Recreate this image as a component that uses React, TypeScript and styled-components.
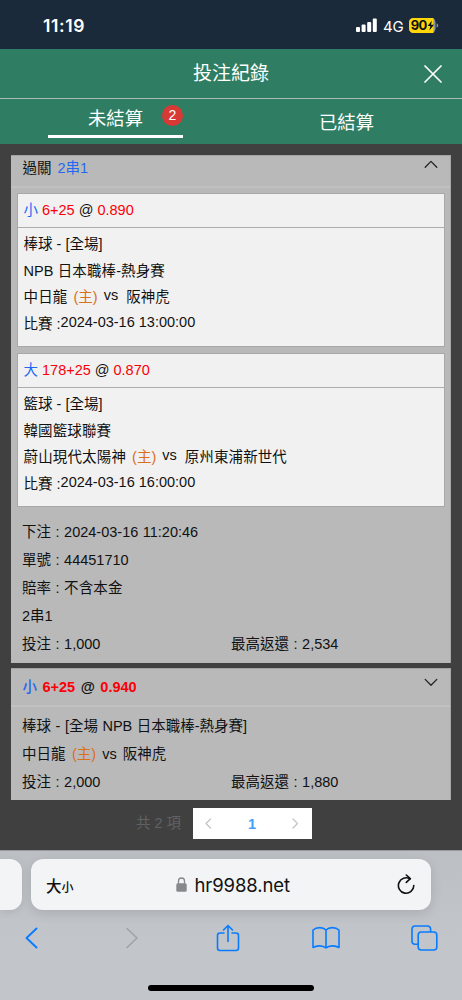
import React from "react";
import styled, { createGlobalStyle } from "styled-components";

const GlobalStyle = createGlobalStyle`
  * { box-sizing: border-box; }
  body {
    margin: 0;
    background: #404040;
    font-family: "Liberation Sans", "Noto Sans CJK TC", sans-serif;
    font-size: 14.5px;
    color: #111;
  }
  svg { display: block; flex: none; }
`;

const Screen = styled.div`
  width: 462px;
  height: 1000px;
  display: flex;
  flex-direction: column;
  overflow: hidden;
  background: #404040;
`;

const StatusBar = styled.header`
  height: 49px;
  flex: none;
  display: flex;
  align-items: center;
  padding: 1px 23px 0 43px;
  background: #1b2a3b;
  color: #fff;
  font-family: Inter, sans-serif;
`;

const Clock = styled.span`
  flex: 1;
  font-size: 17.5px;
  font-weight: 600;
  letter-spacing: 0.6px;
`;

const Network = styled.span`
  margin: 2px 6px 0 6px;
  width: 20px;
  font-size: 15px;
  letter-spacing: -0.3px;
`;

const TitleBar = styled.div`
  height: 50px;
  flex: none;
  display: grid;
  grid-template-columns: 60px 1fr 60px;
  align-items: center;
  background: #2f7e63;
  border-bottom: 1px solid #a9bbb2;
  color: #fff;
`;

const Title = styled.h1`
  grid-column: 2;
  margin: 0;
  text-align: center;
  font-size: 19px;
  font-weight: 400;
  line-height: 50px;
`;

const CloseButton = styled.div`
  display: flex;
  justify-content: center;
  padding-left: 2px;
`;

const Tabs = styled.nav`
  height: 45px;
  flex: none;
  display: grid;
  grid-template-columns: 1fr 1fr;
  justify-items: center;
  background: #2f7e63;
  color: #fff;
  font-size: 18.3px;
`;

const Tab = styled.div<{ $active?: boolean }>`
  position: relative;
  width: 135px;
  height: ${(p) => (p.$active ? 39 : 45)}px;
  line-height: ${(p) => (p.$active ? 40 : 47)}px;
  text-align: center;
  border-bottom: ${(p) => (p.$active ? "3px solid #fff" : "0")};
`;

const Badge = styled.span`
  position: absolute;
  top: 6px;
  right: 0;
  width: 21px;
  height: 21px;
  border-radius: 50%;
  background: #d73a34;
  font-size: 14px;
  line-height: 21px;
`;

const Records = styled.main`
  height: 706px;
  flex: none;
  display: flex;
  flex-direction: column;
  padding: 11px 11px 0;
`;

const Card = styled.section<{ $height: number }>`
  height: ${(p) => p.$height}px;
  margin-bottom: 5px;
  background: #b9b9b9;
  border-top: 1px solid #a3a3a3;
  border-right: 1px solid #a6a6a6;
`;

const CardHead = styled.div<{ $height: number; $bold?: boolean }>`
  display: flex;
  justify-content: space-between;
  height: ${(p) => p.$height}px;
  padding: 0 12px 0 11.5px;
  border-bottom: 2px solid #c1c1c1;
  line-height: ${(p) => (p.$bold ? 36 : 25)}px;
  font-weight: ${(p) => (p.$bold ? 700 : 400)};
`;

const Chevron = styled.div<{ $top: number }>`
  padding-top: ${(p) => p.$top}px;
`;

const Leg = styled.article`
  height: 154px;
  margin: 5px 5px 6px 6px;
  background: #f1f1f1;
  border: 1px solid #a8a8a8;
  & + & { margin-top: 0; }
`;

const LegHead = styled.div`
  height: 34px;
  padding: 0 5.5px;
  border-bottom: 1px solid #adadad;
  line-height: 33px;
`;

const LegBody = styled.div`
  padding: 3px 5.5px;
`;

const Line = styled.div<{ $h: number }>`
  height: ${(p) => p.$h}px;
  line-height: ${(p) => p.$h}px;
  white-space: pre;
`;

const Details = styled.div<{ $top: number }>`
  padding: ${(p) => p.$top}px 11px 0;
  word-spacing: 0.5px;
`;

const Split = styled.div`
  display: grid;
  grid-template-columns: 209px 1fr;
`;

const Text = styled.span<{ $color?: string; $ml?: number; $up?: number; $ls?: number; $weight?: number }>`
  color: ${(p) => p.$color ?? "inherit"};
  margin-left: ${(p) => p.$ml ?? 0}px;
  vertical-align: ${(p) => p.$up ?? 0}px;
  letter-spacing: ${(p) => p.$ls ?? 0}px;
  font-weight: ${(p) => p.$weight ?? "inherit"};
  line-height: 1;
`;

const Pager = styled.div`
  display: flex;
  align-items: center;
  margin: 3px 0 0 125px;
  color: #606266;
`;

const Total = styled.span`
  width: 57px;
  white-space: pre;
  line-height: 31px;
`;

const PageBox = styled.div`
  width: 119px;
  height: 31px;
  display: flex;
  align-items: center;
  justify-content: space-between;
  padding: 0 13px 0 12px;
  background: #fff;
  color: #409eff;
  font-weight: 700;
`;

const Browser = styled.footer`
  flex: 1;
  display: flex;
  flex-direction: column;
  padding-top: 8px;
  background: linear-gradient(#bcc0c5, #c2c6cb 60%);
  border-top: 1px solid #96999c;
`;

const AddressRow = styled.div`
  display: flex;
  gap: 9px;
  height: 51px;
`;

const PreviousPage = styled.div`
  width: 22px;
  background: #f2f4f5;
  border-radius: 0 12px 12px 0;
  box-shadow: 0 2px 8px rgba(0, 0, 0, 0.1);
`;

const AddressBar = styled.div`
  width: 400px;
  display: flex;
  align-items: center;
  padding: 0 14px 0 15px;
  background: #f2f4f5;
  border-radius: 12px;
  box-shadow: 0 3px 12px rgba(0, 0, 0, 0.13);
`;

const TextSize = styled.div`
  width: 130px;
  color: #111;
  font-size: 15.5px;
  font-weight: 500;
  font-family: "Noto Sans CJK TC", sans-serif;
  small { font-size: 12px; }
`;

const Host = styled.span`
  flex: 1;
  margin-left: 7.5px;
  font-family: Inter, sans-serif;
  font-size: 18.5px;
  letter-spacing: -0.1px;
`;

const Toolbar = styled.div`
  display: grid;
  grid-template-columns: repeat(5, 98px);
  align-items: center;
  justify-items: center;
  height: 56px;
  margin: 0 -17px;
`;

const HomeIndicator = styled.div`
  width: 166px;
  height: 6px;
  margin: 19px auto 0;
  border-radius: 3px;
  background: #000;
`;

const BLUE = "#2468f2";
const RED = "#fb0007";
const ORANGE = "#d9701a";

const Home = ({ ml }: { ml: number }) => <Text $color={ORANGE} $ml={ml}>(主)</Text>;

type LegData = { side: string; line: string; odds: string; sport: string; league: string; home: string; away: string; time: string };

const legs: LegData[] = [
  { side: "小", line: "6+25", odds: "0.890", sport: "棒球 - [全場]", league: "NPB 日本職棒-熱身賽", home: "中日龍", away: "阪神虎", time: "2024-03-16 13:00:00" },
  { side: "大", line: "178+25", odds: "0.870", sport: "籃球 - [全場]", league: "韓國籃球聯賽", home: "蔚山現代太陽神", away: "原州東浦新世代", time: "2024-03-16 16:00:00" },
];

const LegCard = ({ leg }: { leg: LegData }) => (
  <Leg>
    <LegHead>
      <Text $color={BLUE}>{leg.side}</Text>
      <Text $color={RED} $ml={4}>{leg.line}</Text>
      <Text $ml={4}>@</Text>
      <Text $color={RED} $ml={4}>{leg.odds}</Text>
    </LegHead>
    <LegBody>
      <Line $h={26.5}>{leg.sport}</Line>
      <Line $h={26.5}><Text $ls={0.1}>{leg.league}</Text></Line>
      <Line $h={26.5}>
        <Text $ls={0.15}>{leg.home}</Text>
        <Home ml={6} />
        <Text $ml={6} $up={2}>vs</Text>
        <Text $ml={8} $ls={0.1}>{leg.away}</Text>
      </Line>
      <Line $h={26.5}>
        <Text>比賽 :</Text>
        <Text $up={2}>{leg.time}</Text>
      </Line>
    </LegBody>
  </Leg>
);

const Arrow = ({ d, w, h, color, stroke }: { d: string; w: number; h: number; color: string; stroke: number }) => (
  <svg width={w} height={h} viewBox={`0 0 ${w} ${h}`} fill="none" stroke={color} strokeWidth={stroke} strokeLinecap="round" strokeLinejoin="round">
    <path d={d} />
  </svg>
);

export default function App() {
  return (
    <Screen>
      <GlobalStyle />
      <StatusBar>
        <Clock>11:19</Clock>
        <svg width="21" height="14" viewBox="0 0 21 14" fill="#fff">
          <rect x="0" y="9" width="4" height="5" rx="1" />
          <rect x="5.6" y="6.5" width="4" height="7.5" rx="1" />
          <rect x="11.2" y="4" width="4" height="10" rx="1" />
          <rect x="16.8" y="0.5" width="4" height="13.5" rx="1" />
        </svg>
        <Network>4G</Network>
        <svg width="30" height="15" viewBox="0 0 30 15">
          <rect width="26.500" height="15" rx="4.500" fill="#8d959e" />
          <path d="M4.500 0H24.500V15H4.500A4.500 4.500 0 0 1 0 10.500V4.500A4.500 4.500 0 0 1 4.500 0Z" fill="#ffd60a" />
          <path d="M27.600 5.200Q29.200 6 29.200 7.500T27.600 9.800Z" fill="#8d959e" />
          <text x="1.800" y="12.200" fontFamily="Inter, sans-serif" fontWeight="700" fontSize="13" textLength="16.500" fill="#111">90</text>
          <path d="M22.800 2.500L18.700 8H21.300L20.400 12.500L25 6.800H22.100Z" fill="#111" />
        </svg>
      </StatusBar>

      <TitleBar>
        <Title>投注紀錄</Title>
        <CloseButton>
          <Arrow w={18} h={18} d="M1 1L17 17M17 1L1 17" color="#fff" stroke={1.7} />
        </CloseButton>
      </TitleBar>
      <Tabs>
        <Tab $active>未結算<Badge>2</Badge></Tab>
        <Tab>已結算</Tab>
      </Tabs>

      <Records>
        <Card $height={508}>
          <CardHead $height={32}>
            <span>過關<Text $color={BLUE} $ml={6}>2串1</Text></span>
            <Chevron $top={4}><Arrow w={14} h={9} d="M1.2 7.2L7 1.4L12.8 7.2" color="#222" stroke={1.3} /></Chevron>
          </CardHead>
          {legs.map((leg) => <LegCard key={leg.time} leg={leg} />)}
          <Details $top={5}>
            <Line $h={28}>下注 : 2024-03-16 11:20:46</Line>
            <Line $h={28}>單號 : 44451710</Line>
            <Line $h={28}>賠率 : <Text $ls={0.1}>不含本金</Text></Line>
            <Line $h={28}>2串1</Line>
            <Split>
              <Line $h={28}>投注 : 1,000</Line>
              <Line $h={28}>最高返還 : 2,534</Line>
            </Split>
          </Details>
        </Card>

        <Card $height={132}>
          <CardHead $height={38} $bold>
            <span>
              <Text $color={BLUE} $weight={500}>小</Text>
              <Text $color={RED} $ml={5.5}>6+25</Text>
              <Text $ml={5.5}>@</Text>
              <Text $color={RED} $ml={5.5}>0.940</Text>
            </span>
            <Chevron $top={9}><Arrow w={14} h={9} d="M1.2 1.4L7 7.2L12.8 1.4" color="#222" stroke={1.3} /></Chevron>
          </CardHead>
          <Details $top={5}>
            <Line $h={28}>棒球 - [全場 NPB 日本職棒-熱身賽]</Line>
            <Line $h={28}><Text>中日龍</Text><Home ml={6.5} /><Text $ml={6}>vs</Text><Text $ml={6}>阪神虎</Text></Line>
            <Split>
              <Line $h={28}>投注 : 2,000</Line>
              <Line $h={28}>最高返還 : 1,880</Line>
            </Split>
          </Details>
        </Card>

        <Pager>
          <Total>共 2 項</Total>
          <PageBox>
            <Arrow w={7} h={11} d="M5.5 1L1 5.5L5.5 10" color="#c0c4cc" stroke={1.3} />
            <span>1</span>
            <Arrow w={7} h={11} d="M1 1L5.5 5.5L1 10" color="#c0c4cc" stroke={1.3} />
          </PageBox>
        </Pager>
      </Records>

      <Browser>
        <AddressRow>
          <PreviousPage />
          <AddressBar>
            <TextSize>大<small>小</small></TextSize>
            <svg width="11" height="15" viewBox="0 0 11 15">
              <rect x="0.3" y="6.2" width="10.4" height="8.6" rx="1.5" fill="#88888c" />
              <path d="M2.5 7V4A3 3 0 0 1 8.5 4V7" fill="none" stroke="#88888c" strokeWidth="1.3" />
            </svg>
            <Host>hr9988.net</Host>
            <svg width="20" height="22" viewBox="0 0 20 22" fill="none" stroke="#111" strokeWidth="1.6" strokeLinecap="round" strokeLinejoin="round">
              <path d="M16.800 11.600A7.700 7.700 0 1 1 13 4.900" />
              <path d="M9.300 1L13.300 4.700L9.300 8.400" />
            </svg>
          </AddressBar>
        </AddressRow>
        <Toolbar>
          <Arrow w={16} h={22} d="M12.5 1.5L2.5 11L12.5 20.5" color="#087bff" stroke={1.9} />
          <Arrow w={16} h={22} d="M5 1.5L15 11L5 20.5" color="#9fa2a6" stroke={1.6} />
          <svg width="24" height="28" viewBox="0 0 24 28" fill="none" stroke="#087bff" strokeWidth="1.6" strokeLinecap="round" strokeLinejoin="round">
            <path d="M8 9H4A2.500 2.500 0 0 0 1.500 11.500V24A2.500 2.500 0 0 0 4 26.500H20A2.500 2.500 0 0 0 22.500 24V11.500A2.500 2.500 0 0 0 20 9H16" />
            <path d="M12 17.500V1.500M7.500 6L12 1.500L16.500 6" />
          </svg>
          <svg width="28" height="24" viewBox="0 0 28 24" fill="none" stroke="#087bff" strokeWidth="1.6" strokeLinecap="round" strokeLinejoin="round">
            <path d="M14 4C11 .8 4.500 .8 1 4V21.500C4.500 19.200 11 19.200 14 22C17 19.200 23.500 19.200 27 21.500V4C23.500 .8 17 .8 14 4V22" />
          </svg>
          <svg width="27" height="26" viewBox="0 0 27 26" fill="none" stroke="#087bff" strokeWidth="1.600" strokeLinejoin="round">
            <rect x="7.200" y="7" width="18.600" height="18" rx="3" />
            <path d="M7.200 19.300H4A3 3 0 0 1 1 16.300V4A3 3 0 0 1 4 1H16.600A3 3 0 0 1 19.600 4V7" />
          </svg>
        </Toolbar>
        <HomeIndicator />
      </Browser>
    </Screen>
  );
}
